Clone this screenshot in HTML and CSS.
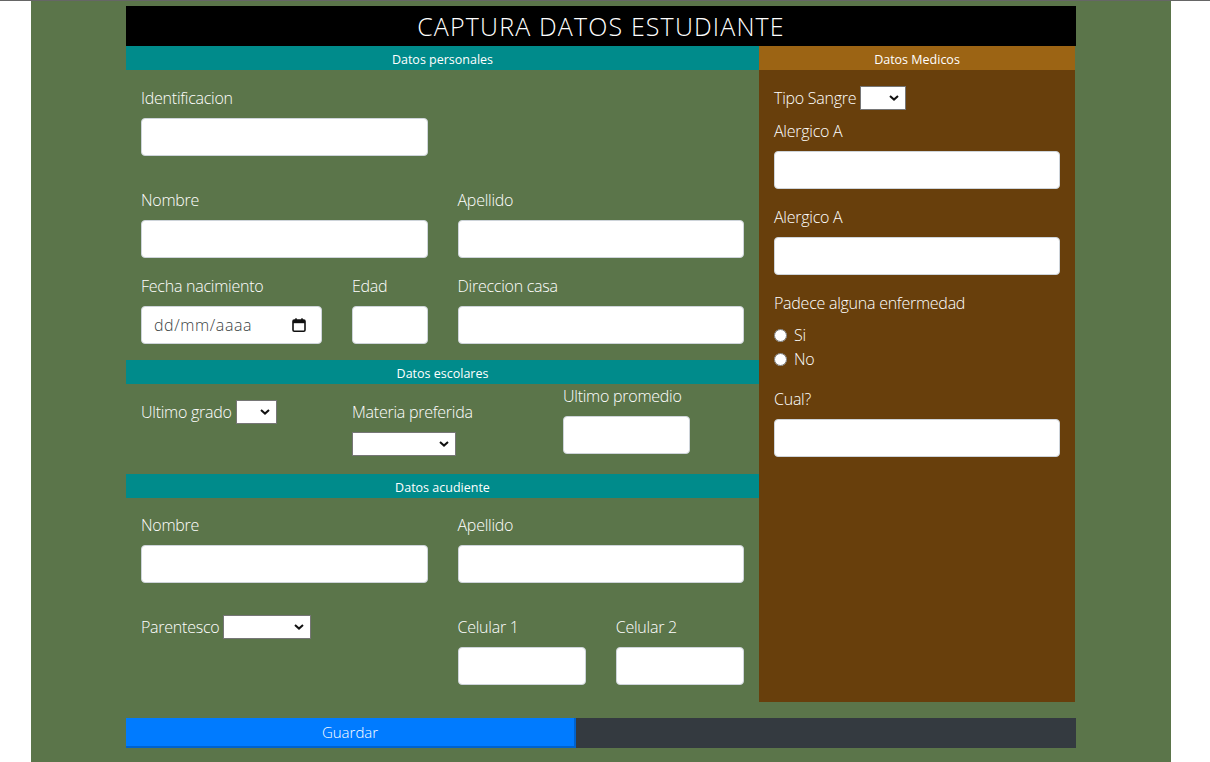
FILE: index.html
```html
<!DOCTYPE html>
<html lang="es">
<head>
<meta charset="utf-8">
<title>Captura datos estudiante</title>
<link rel="stylesheet" href="styles.css">
</head>
<body>
<div class="page">
  <div class="sheet">
    <h1 class="title">CAPTURA DATOS ESTUDIANTE</h1>
    <div class="grid">
      <div class="left">
        <div class="bar teal">Datos personales</div>
        <div class="sec sec-personal">
          <div class="row row-loose">
            <div class="field half">
              <label>Identificacion</label>
              <input class="control" type="text">
            </div>
          </div>
          <div class="row">
            <div class="field half">
              <label>Nombre</label>
              <input class="control" type="text">
            </div>
            <div class="field half">
              <label>Apellido</label>
              <input class="control" type="text">
            </div>
          </div>
          <div class="row row-last">
            <div class="half split">
              <div class="field fecha">
                <label>Fecha nacimiento</label>
                <div class="control date-control">
                  <span class="date-ph">dd/mm/aaaa</span>
                  <svg class="cal" width="14" height="14" viewBox="0 0 14 14" aria-hidden="true">
                    <rect x="1" y="2" width="12" height="11.2" rx="1.2" fill="none" stroke="#111" stroke-width="1.6"/>
                    <rect x="1" y="2" width="12" height="3.2" fill="#111"/>
                    <rect x="3.2" y="0.3" width="1.6" height="3" fill="#111"/>
                    <rect x="9.2" y="0.3" width="1.6" height="3" fill="#111"/>
                  </svg>
                </div>
              </div>
              <div class="field edad">
                <label>Edad</label>
                <input class="control" type="text">
              </div>
            </div>
            <div class="field half">
              <label>Direccion casa</label>
              <input class="control" type="text">
            </div>
          </div>
        </div>

        <div class="bar teal">Datos escolares</div>
        <div class="sec sec-escolar">
          <div class="third pad-top inline-field">
            <label>Ultimo grado</label>
            <span class="sel sel-grado"><select></select><svg class="chev" width="10" height="6" viewBox="0 0 10 6"><path d="M1 1 L5 4.6 L9 1" fill="none" stroke="#111" stroke-width="2"/></svg></span>
          </div>
          <div class="third pad-top field">
            <label>Materia preferida</label>
            <span class="sel sel-materia"><select></select><svg class="chev" width="10" height="6" viewBox="0 0 10 6"><path d="M1 1 L5 4.6 L9 1" fill="none" stroke="#111" stroke-width="2"/></svg></span>
          </div>
          <div class="third field">
            <label>Ultimo promedio</label>
            <input class="control promedio" type="text">
          </div>
        </div>

        <div class="bar teal">Datos acudiente</div>
        <div class="sec sec-acudiente">
          <div class="row row-loose">
            <div class="field half">
              <label>Nombre</label>
              <input class="control" type="text">
            </div>
            <div class="field half">
              <label>Apellido</label>
              <input class="control" type="text">
            </div>
          </div>
          <div class="row row-end">
            <div class="half inline-field">
              <label>Parentesco</label>
              <span class="sel sel-parentesco"><select></select><svg class="chev" width="10" height="6" viewBox="0 0 10 6"><path d="M1 1 L5 4.6 L9 1" fill="none" stroke="#111" stroke-width="2"/></svg></span>
            </div>
            <div class="half split">
              <div class="field cel">
                <label>Celular 1</label>
                <input class="control" type="text">
              </div>
              <div class="field cel">
                <label>Celular 2</label>
                <input class="control" type="text">
              </div>
            </div>
          </div>
        </div>
      </div>

      <div class="right">
        <div class="bar gold">Datos Medicos</div>
        <div class="med">
          <div class="inline-field mb9">
            <label>Tipo Sangre</label>
            <span class="sel sel-sangre"><select></select><svg class="chev" width="10" height="6" viewBox="0 0 10 6"><path d="M1 1 L5 4.6 L9 1" fill="none" stroke="#111" stroke-width="2"/></svg></span>
          </div>
          <div class="field mb16">
            <label>Alergico A</label>
            <input class="control" type="text">
          </div>
          <div class="field mb16">
            <label>Alergico A</label>
            <input class="control" type="text">
          </div>
          <div class="field mb16">
            <label>Padece alguna enfermedad</label>
            <div class="radios">
              <label class="radio"><input type="radio" name="enf"><span>Si</span></label>
              <label class="radio"><input type="radio" name="enf"><span>No</span></label>
            </div>
          </div>
          <div class="field">
            <label>Cual?</label>
            <input class="control" type="text">
          </div>
        </div>
      </div>
    </div>

    <div class="actions">
      <button class="btn-save" type="button">Guardar</button>
      <div class="filler"></div>
    </div>
  </div>
</div>
</body>
</html>
```

FILE: styles.css
```css
* { box-sizing: border-box; }

html, body {
  margin: 0;
  padding: 0;
  background: #ffffff;
}

body {
  border-top: 1px solid #666666;
  font-family: "Open Sans", "Noto Sans", sans-serif;
  font-weight: 300;
  font-size: 16px;
  line-height: 24px;
  letter-spacing: -0.25px;
  color: #ffffff;
}

.page {
  width: 1140px;
  margin: 0 39px 0 31px;
  background: #5b754a;
  min-height: 761px;
  padding: 5px 95px 14px;
}

.sheet {
  width: 950px;
}

.title {
  margin: 0;
  height: 40px;
  background: #000000;
  color: #ffffff;
  text-align: center;
  font-weight: 300;
  font-size: 25px;
  line-height: 40px;
  letter-spacing: 1.15px;
}

.grid {
  display: grid;
  grid-template-columns: 633px 316px;
}

.bar {
  height: 24px;
  padding-top: 4px;
  line-height: 20px;
  text-align: center;
  font-size: 12.5px;
  font-weight: 400;
  letter-spacing: 0;
  color: #ffffff;
}
.teal { background: #008b8b; }
.gold { background: #9c6414; }

.sec {
  padding: 16px 15px 0;
}
.sec-acudiente { padding-top: 15px; }

.row {
  display: flex;
  gap: 30px;
  margin-bottom: 16px;
}
.row-loose { margin-bottom: 32px; }
.row-end { margin-bottom: 17px; }

.half {
  width: 286.5px;
  flex: none;
}

.split {
  display: flex;
  gap: 30px;
}
.fecha { width: 181px; }
.edad { width: 75.5px; }
.cel { width: 128.25px; }

.field {
  display: flex;
  flex-direction: column;
  align-items: flex-start;
}
.field > label {
  display: block;
  margin-bottom: 8px;
}

.control {
  display: block;
  width: 100%;
  height: 38px;
  background: #ffffff;
  border: 1px solid #ced4da;
  border-radius: 4px;
  padding: 6px 12px;
  font-family: inherit;
  font-size: 16px;
  color: #495057;
  margin: 0;
}

.date-control {
  display: flex;
  align-items: center;
  justify-content: space-between;
  font-weight: 300;
  letter-spacing: 0.6px;
}
.date-ph { color: #3a3f44; font-size: 16px; }
.cal { flex: none; margin-right: 3px; }

.inline-field {
  display: flex;
  align-items: center;
  height: 24px;
}
.inline-field > label { margin-right: 4px; }

.sel {
  position: relative;
  display: inline-block;
  height: 24px;
}
.sel select {
  -webkit-appearance: none;
  appearance: none;
  display: block;
  width: 100%;
  height: 24px;
  margin: 0;
  background: #ffffff;
  border: 1px solid #767676;
  border-radius: 0;
  padding: 0 4px;
}
.sel .chev {
  position: absolute;
  right: 7px;
  top: 9px;
  pointer-events: none;
}
.sel-grado { width: 41px; }
.sel-materia { width: 104px; }
.sel-parentesco { width: 88px; }
.sel-sangre { width: 46px; }

.sec-escolar {
  display: flex;
  gap: 30px;
  padding: 0 15px 18px;
}
.third { width: 181px; flex: none; }
.pad-top { margin-top: 16px; }
.promedio { width: 127px; }

.right {
  background: #683f0c;
}
.med {
  padding: 16px 15px;
}
.mb9 { margin-bottom: 9px; }
.mb16 { margin-bottom: 16px; }

.radios {
  display: flex;
  flex-direction: column;
}
.radio {
  display: flex;
  align-items: center;
  height: 24px;
}
.radio input {
  width: 13px;
  height: 13px;
  margin: 0 7px 0 0;
}

.actions {
  display: flex;
  margin-top: 16px;
  height: 30px;
}
.btn-save {
  width: 450px;
  height: 30px;
  margin: 0;
  padding: 0;
  background: #007bff;
  color: #ffffff;
  border: none;
  border-right: 2px solid #0062cc;
  border-bottom: 2px solid #0062cc;
  font-family: inherit;
  font-weight: 300;
  font-size: 15px;
  line-height: 28px;
}
.filler {
  flex: 1;
  background: #343a40;
}
```
